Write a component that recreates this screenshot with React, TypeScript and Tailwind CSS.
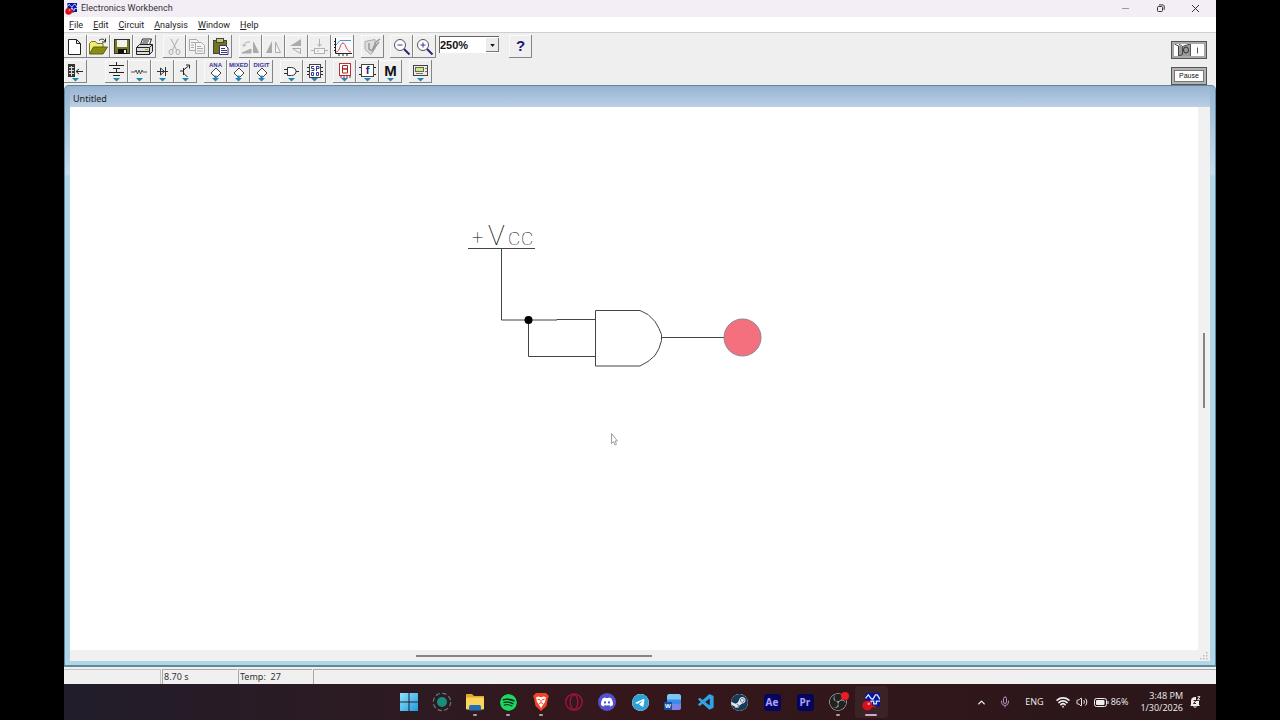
import type { ReactNode } from "react";
import { ChevronUp, Mic, Wifi, Volume2 } from "lucide-react";
import { SiDiscord, SiObsstudio, SiSpotify, SiSteam, SiTelegram } from "react-icons/si";
import { VscVscode } from "react-icons/vsc";

type Tool = { label: string; icon: ReactNode };

const menus = ["File", "Edit", "Circuit", "Analysis", "Window", "Help"];

const Icon = ({ children }: { children: ReactNode }) => (
    <svg viewBox="0 0 23 23" className="h-full w-full" fill="none" stroke="#222" strokeWidth="1" aria-hidden="true">
        {children}
    </svg>
);

// Parts-bin icons carry a small blue arrow under the symbol
const Bin = ({ children }: { children: ReactNode }) => (
    <Icon>
        {children}
        <path d="M8 18h7l-3.500 3.500z" fill="#2383b8" stroke="none" />
    </Icon>
);

const SourceIcon = ({ name }: { name: string }) => (
    <Bin>
        <text x="11.5" y="7" textAnchor="middle" fontSize="6" fontWeight="bold" fill="#38349c" stroke="none" fontFamily="Liberation Sans, sans-serif">{name}</text>
        <path d="M7 13l5-5 5 5-4 4h-2z" fill="#fff" stroke="#444" />
        <path d="M11.500 15.500v4" stroke="#2383b8" strokeWidth="2" />
    </Bin>
);

const AppLogo = ({ className }: { className: string }) => (
    <svg viewBox="0 0 20 20" className={className} aria-hidden="true">
        <rect x="4" y="0" width="16" height="15" fill="#06139a" />
        <path d="M4 6l3-4 3 4 2 1 3-5 2 0 3 5M10 12V9h3v3h3V9h4" fill="none" stroke="#cfe5ff" strokeWidth="1.500" />
        <circle cx="6" cy="14" r="5.500" fill="#d80f1c" />
        <circle cx="7.500" cy="12" r="1.500" fill="#ff9a9a" />
        <path d="M10 15h5" stroke="#d80f1c" strokeWidth="2" />
    </svg>
);

const fileTools: Tool[] = [
    { label: "New", icon: <Icon><path d="M4.500 4.500h8l4 4v11h-12zM12.500 4.500v4h4" fill="#fff" /></Icon> },
    {
        label: "Open",
        icon: (
            <Icon>
                <path d="M2.500 19V8.500l2-2h4l1.500 2h6V12" fill="#f0ee70" stroke="#77752a" />
                <path d="M2.500 19l4-7h14l-4.500 7z" fill="#8a8c16" stroke="#5d6010" />
                <path d="M12 5.500c2-2 5-2 6 1M18.500 3.500v3.500h-3.500" />
            </Icon>
        ),
    },
    {
        label: "Save",
        icon: (
            <Icon>
                <rect x="4.500" y="4.500" width="15" height="14" fill="#777a18" stroke="#333" />
                <rect x="7" y="5" width="10" height="7" fill="#f2f2f2" stroke="none" />
                <rect x="8" y="14" width="9" height="5" fill="#111" stroke="none" />
                <rect x="14" y="15" width="2" height="3" fill="#eee" stroke="none" />
            </Icon>
        ),
    },
    {
        label: "Print",
        icon: (
            <Icon>
                <path d="M7 11l2.500-7h9l-2.500 7" fill="#fff" />
                <path d="M3.500 12.500l3-3h13v7l-3 3h-13z" fill="#ddd" />
                <path d="M3.500 12.500h13v7M16.500 12.500l3-3M4 16.500h12M10 6h6M9 8h6" />
                <path d="M12 14.500h3" stroke="#b0a000" />
            </Icon>
        ),
    },
];

const editTools: Tool[] = [
    { label: "Cut", icon: <Icon><g stroke="#aaa"><path d="M8 4l5.500 11M15 4L9.500 15" /><ellipse cx="8" cy="17" rx="2" ry="2.500" /><ellipse cx="15" cy="17" rx="2" ry="2.500" /></g></Icon> },
    { label: "Copy", icon: <Icon><g stroke="#aaa" fill="#f4f4f4"><path d="M3.500 4.500h7l2 2v9h-9z" /><path d="M9.500 7.500h6l3 3v8h-9z" /><path d="M5 7.500h4M5 10h3M5 12.500h3M11 11.500h4M11 13.500h6M11 16h6" /></g></Icon> },
    {
        label: "Paste",
        icon: (
            <Icon>
                <rect x="4.500" y="5.500" width="13" height="13" fill="#73751c" stroke="#444" />
                <rect x="7.500" y="3.500" width="7" height="4" fill="#c9c56a" stroke="#444" />
                <path d="M10.500 10.500h6l2.500 2.500v6.500h-8.500z" fill="#fff" stroke="#37347e" />
                <path d="M12 13.500h4M12 15.500h6M12 17.500h6" stroke="#37347e" />
            </Icon>
        ),
    },
];

const viewTools: Tool[] = [
    { label: "Rotate", icon: <Icon><path d="M3 18h9v-4zM14.500 17.500v-10l5 10z" fill="#aaa" stroke="#aaa" /><path d="M5 11c0-3 2-4 6-4M3 9.500l2 2 2-2" stroke="#aaa" /></Icon> },
    { label: "Flip horizontal", icon: <Icon><path d="M10 6v12H4z" fill="#aaa" stroke="none" /><path d="M13.500 7v10.500h5z" stroke="#aaa" fill="#f4f4f4" /></Icon> },
    { label: "Flip vertical", icon: <Icon><path d="M16 4v7H5z" fill="#aaa" stroke="none" /><path d="M15.500 13.500v5l-8-5z" stroke="#aaa" fill="#f4f4f4" /></Icon> },
    { label: "Create subcircuit", icon: <Icon><g stroke="#b0b0b0"><path d="M11.500 4v7M9.500 9l2 2.500 2-2.500M3 15.500h3M17 15.500h3" /><rect x="6.500" y="13.500" width="10" height="5" fill="#f4f4f4" /><path d="M9 16h2" /></g></Icon> },
    {
        label: "Display graphs",
        icon: (
            <Icon>
                <rect x="2" y="2" width="20" height="19" fill="#fafafa" stroke="none" />
                <path d="M4.500 3v15.500H21M3 6.500h1M3 9.500h1M3 12.500h1M3 15.500h1M8 19v2M12 19v2M16 19v2" />
                <path d="M5 10l4-4.500h11" stroke="#4898d0" />
                <path d="M5 17c4 0 4-9 7-9s3 9 8 9" stroke="#d84050" />
            </Icon>
        ),
    },
];

const propertyTools: Tool[] = [
    { label: "Component properties", icon: <Icon><path d="M4 6.500l10-2v9l-4 6-6-5z" fill="#ddd" stroke="#aaa" /><path d="M8 8v6l3 2 4-9 4-3M11 16l7-9" stroke="#999" strokeWidth="1.500" /></Icon> },
];

const zoomTools: Tool[] = [
    { label: "Zoom out", icon: <Icon><circle cx="10" cy="10" r="5.500" fill="#fff" stroke="#555" /><path d="M14 14l5.500 5.500" stroke="#29237c" strokeWidth="2" /><path d="M7.500 10h5" stroke="#38349c" /></Icon> },
    { label: "Zoom in", icon: <Icon><circle cx="10" cy="10" r="5.500" fill="#fff" stroke="#555" /><path d="M14 14l5.500 5.500" stroke="#29237c" strokeWidth="2" /><path d="M7.500 10h5M10 7.500v5" stroke="#38349c" /></Icon> },
];

const helpTools: Tool[] = [{ label: "Help topics", icon: <span className="font-['Liberation_Sans',sans-serif] text-[15px] font-bold text-[#1d1778]">?</span> }];

const partBins: Tool[][] = [
    [
        {
            label: "Favorites",
            icon: (
                <Bin>
                    <rect x="4" y="4" width="7" height="13" fill="#333" stroke="none" />
                    <path d="M5 7.500h5M5 10.500h5M5 13.500h5M7.500 6v10" stroke="#ddd" />
                    <path d="M12 11.500h7M15 9l-3 2.500 3 2.500" />
                </Bin>
            ),
        },
    ],
    [
        { label: "Sources", icon: <Bin><path d="M11.500 2v3M4 5.500h15M8 8.500h7M4 12.500h15M8 15.500h7M11.500 8.500v4" /></Bin> },
        { label: "Basic", icon: <Bin><path d="M3 12h4l1-2 1.500 4 1.500-4 1.500 4 1.500-4 1 2h4" stroke="#555" /></Bin> },
        { label: "Diodes", icon: <Bin><path d="M6 11.500h11M9.500 8v7l4-3.500zM14.500 7v9" stroke="#333" /></Bin> },
        { label: "Transistors", icon: <Bin><path d="M6 11h3.500M9.500 8v7M9.500 10l5-4M9.500 13l4 4M12 5h3.500v3.500" stroke="#222" /></Bin> },
    ],
    [
        { label: "Analog ICs", icon: <SourceIcon name="ANA" /> },
        { label: "Mixed ICs", icon: <SourceIcon name="MIXED" /> },
        { label: "Digital ICs", icon: <SourceIcon name="DIGIT" /> },
    ],
    [
        { label: "Logic gates", icon: <Bin><path d="M7.500 7.500h4c6 0 6 8 0 8h-4zM4 9.500h3.500M4 13.500h3.500M16 11.500h3" fill="#fff" stroke="#333" /></Bin> },
        {
            label: "Digital",
            icon: (
                <Bin>
                    <rect x="6.500" y="4.500" width="11" height="13" fill="#fff" stroke="#444" />
                    <path d="M4 7.500h2M4 11.500h2M4 14.500h2M18 7.500h2M18 11.500h2M18 14.500h2" />
                    <path d="M11 6.500H8.500v2H11v2H8.500M13.500 11V6.500H16v2h-2.500M8.500 12.500h2v3h-2zM13.500 12.500h2v3h-2z" stroke="#38349c" />
                </Bin>
            ),
        },
    ],
    [
        {
            label: "Indicators",
            icon: (
                <Bin>
                    <rect x="6.500" y="3.500" width="11" height="12" fill="#fff" stroke="#b33" />
                    <path d="M9.500 5.500h5v3.500h-5zM9.500 9h5v4h-5zM8 15v3M11 15v3M14 15v3M17 15v3" stroke="#a22" />
                </Bin>
            ),
        },
        {
            label: "Controls",
            icon: (
                <Bin>
                    <rect x="5.500" y="4.500" width="12" height="12" fill="#fff" stroke="#444" />
                    <path d="M3 7.500h2M3 14.500h2M18 7.500h2M18 14.500h2" />
                    <text x="11.5" y="14" textAnchor="middle" fontSize="11" fontWeight="bold" fill="#29237c" stroke="none" fontFamily="Liberation Sans, sans-serif">f</text>
                </Bin>
            ),
        },
        { label: "Miscellaneous", icon: <Bin><text x="11.5" y="16" textAnchor="middle" fontSize="15" fontWeight="bold" fill="#111" stroke="none" fontFamily="Liberation Sans, sans-serif">M</text></Bin> },
    ],
    [
        {
            label: "Instruments",
            icon: (
                <Bin>
                    <rect x="4.500" y="5.500" width="14" height="10" fill="#eeeee0" stroke="#444" />
                    <rect x="6.500" y="7.500" width="8" height="4" fill="#d5e87b" stroke="#666" />
                    <path d="M16 8.500h2M16 11.500h2M7 13.500h7" stroke="#777" />
                </Bin>
            ),
        },
    ],
];

const ToolGroup = ({ tools, className }: { tools: Tool[]; className?: string }) => (
    <div className={`flex ${className ?? ""}`}>
        {tools.map((tool) => (
            <button
                key={tool.label}
                aria-label={tool.label}
                className="flex h-[23px] w-[23px] items-center justify-center bg-[#efefef] shadow-[inset_-1px_-1px_0_#858585,inset_1px_1px_0_#fafafa]"
            >
                {tool.icon}
            </button>
        ))}
    </div>
);

const TitleBar = () => (
    <header className="flex h-[17px] shrink-0 items-center bg-[#f3edf6] pr-[3px] pl-px">
        <AppLogo className="h-3 w-3" />
        <h1 className="ml-1 font-['Roboto',sans-serif] text-[9px] text-[#333]">Electronics Workbench</h1>
        <div className="ml-auto flex">
            <button aria-label="Minimize" className="flex h-4 w-[35px] items-center justify-center">
                <svg viewBox="0 0 9 9" className="h-[9px] w-[9px]" stroke="#999"><path d="M1 4.500h7" /></svg>
            </button>
            <button aria-label="Restore" className="flex h-4 w-[35px] items-center justify-center">
                <svg viewBox="0 0 9 9" className="h-[9px] w-[9px]" fill="none" stroke="#333"><rect x="1.500" y="2.500" width="5" height="5" rx="1" /><path d="M3 .9h4.200l1 1v4" /></svg>
            </button>
            <button aria-label="Close" className="flex h-4 w-[35px] items-center justify-center">
                <svg viewBox="0 0 9 9" className="h-[9px] w-[9px]" stroke="#333"><path d="M1 1l7 7M8 1L1 8" /></svg>
            </button>
        </div>
    </header>
);

const MenuBar = () => (
    <nav className="flex h-4 shrink-0 items-center gap-[10px] border-b border-[#cfcfcf] bg-white pl-[5px] font-['Roboto',sans-serif] text-[9px] text-[#222]">
        {menus.map((menu) => (
            <button key={menu} className="leading-[14px]">
                <span className="underline">{menu[0]}</span>{menu.slice(1)}
            </button>
        ))}
    </nav>
);

const Toolbars = () => (
    <div className="flex shrink-0 justify-between bg-[#efefef] pt-0.5 pr-[9px]">
        <div className="flex flex-col gap-0.5 pb-0.5">
            <div className="flex items-start">
                <ToolGroup tools={fileTools} />
                <ToolGroup tools={editTools} className="ml-[7px]" />
                <ToolGroup tools={viewTools} className="ml-[7px]" />
                <ToolGroup tools={propertyTools} className="ml-[7px]" />
                <ToolGroup tools={zoomTools} className="ml-[6px]" />
                <div className="relative mt-px ml-[3px] flex h-[17px] w-[60px]">
                    <select aria-label="Zoom" defaultValue="250%" className="block h-[17px] w-full appearance-none border-t border-l border-[#666] bg-white font-['Liberation_Sans',sans-serif] text-[11px] leading-[14px] font-bold text-[#111]">
                        <option>100%</option>
                        <option>250%</option>
                    </select>
                    <span className="pointer-events-none absolute top-0.5 right-0 flex h-[14px] w-[13px] items-center justify-center bg-[#ececec] shadow-[inset_-1px_-1px_0_#777]">
                        <svg viewBox="0 0 6 4" className="h-[3px] w-[5px]"><path d="M0 0h6L3 4z" fill="#111" /></svg>
                    </span>
                </div>
                <ToolGroup tools={helpTools} className="ml-[10px]" />
            </div>
            <div className="flex gap-[7px]">
                {partBins.map((bin, i) => (
                    <ToolGroup key={i} tools={bin} className={i === 1 ? "ml-[11px]" : ""} />
                ))}
            </div>
        </div>
        <div className="flex flex-col justify-between pt-[6px]">
            <button aria-label="Power switch" className="h-[18px] w-9 border border-[#555] bg-[#a9a9a9] p-0.5">
                <svg viewBox="0 0 30 12" className="h-full w-full" fill="none" stroke="#555">
                    <rect x="0" y="0" width="30" height="12" fill="#fff" stroke="none" />
                    <path d="M4.500 1l4 2 7.500-3v12H5z" fill="#999" stroke="none" />
                    <path d="M.5 0l4 2v10M4.500 12l4-1.500V2.500L5 0M8.500 2.500L16 0" stroke="#444" />
                    <ellipse cx="12" cy="6" rx="2.500" ry="3" stroke="#333" />
                    <path d="M16.500 0v12M23.500 3.500v6" />
                </svg>
            </button>
            <button className="h-[18px] w-9 border border-[#555] bg-[#b4b4b4] p-0.5">
                <span className="flex h-full items-center justify-center border border-[#777] bg-white font-['Liberation_Sans',sans-serif] text-[7px] text-[#111]">Pause</span>
            </button>
        </div>
    </div>
);

const Circuit = () => (
    <svg viewBox="70 107 1128 543" className="h-full min-h-0 w-full min-w-0 flex-1 bg-white" fill="none" stroke="#444" role="img" aria-label="AND gate circuit">
        <g fill="#000" stroke="none" fontFamily="Roboto, sans-serif" fontWeight="100">
            <text x="472" y="244" fontSize="20">+</text>
            <text x="488" y="245" fontSize="28">V</text>
            <text x="508" y="245" fontSize="19">C</text>
            <text x="521" y="245" fontSize="19">C</text>
        </g>
        <path d="M468 248.500h67M501.500 248.500v71.500H557v-.5h38M528.500 320v36.500H595M661 337.500h63" />
        <path d="M595.500 310.500H640l8 4 7 7 4 7 2.500 6v6l-2.500 8-4 7-7 6-8 4.500h-44.500z" />
        <circle cx="528.500" cy="320" r="4" fill="#000" stroke="none" />
        <circle cx="742.500" cy="337.500" r="18.500" fill="#f4707e" stroke="#888" />
        <path d="M611.500 433.500v10l2-2 1.500 3.500 1.500-.8-1.500-3.200h2.500z" fill="#fff" stroke="#888" strokeWidth=".8" />
    </svg>
);

const CircuitWindow = () => (
    <main className="flex min-h-0 flex-1 flex-col rounded-t-[5px] border border-b-2 border-[#5c8a99] bg-[linear-gradient(#98b4d2,#c3dcee_88px,#b0d5e6_90px)] px-[5px] pb-1">
        <h2 className="flex h-[21px] shrink-0 items-end bg-linear-to-b from-[#98b4d2] to-[#b9cfe4] pl-[3px] font-['Noto_Sans',sans-serif] text-[9px] leading-4 text-[#222]">Untitled</h2>
        <div className="flex min-h-0 flex-1">
            <Circuit />
            <div className="flex w-3 shrink-0 flex-col items-center bg-[#f1f1f1]">
                <div className="flex-[226]" />
                <div className="w-0.5 flex-[75] bg-[#858585]" />
                <div className="flex-[242]" />
            </div>
        </div>
        <div className="flex h-[11px] shrink-0 items-center bg-[#f0f0f0]">
            <div className="flex-[347]" />
            <div className="h-0.5 flex-[236] bg-[#858585]" />
            <div className="flex flex-[557] justify-end pr-0.5">
                <svg viewBox="0 0 8 8" className="h-2 w-2" fill="#bbb"><path d="M6 0h1.500v1.500H6zM3 3h1.500v1.500H3zM6 3h1.500v1.500H6zM0 6h1.500v1.500H0zM3 6h1.500v1.500H3zM6 6h1.500v1.500H6z" /></svg>
            </div>
        </div>
    </main>
);

const StatusBar = () => (
    <footer className="flex h-[17px] shrink-0 gap-px bg-[#f0f0f0] pt-0.5 font-['Noto_Sans',sans-serif] text-[9px] leading-[14px] text-[#333]">
        <div className="w-[97px] border-t border-r border-[#c4c4c4]" />
        <div className="w-[75px] border-t border-l border-[#a8a8a8] pl-px">8.70 s</div>
        <div className="w-[74px] border-t border-l border-[#a8a8a8] pl-px whitespace-pre">Temp:  27</div>
        <div className="flex-1 border-t border-l border-[#a8a8a8]" />
    </footer>
);

const AdobeTile = ({ children }: { children: ReactNode }) => (
    <span className="flex h-[17px] w-[17px] items-center justify-center rounded-[3px] bg-[#06055c] text-[10px] font-bold text-[#a9a4ff]">{children}</span>
);

type TaskApp = Tool & { state?: "running" | "active" };

const taskApps: TaskApp[] = [
    {
        label: "Start",
        icon: (
            <svg viewBox="0 0 18 18" className="h-[18px] w-[18px]">
                <defs><linearGradient id="win" x1="0" y1="0" x2="1" y2="1"><stop stopColor="#8be4fc" /><stop offset="1" stopColor="#229ae0" /></linearGradient></defs>
                <path d="M0 0h8.500v8.500H0zM9.500 0H18v8.500H9.500zM0 9.500h8.500V18H0zM9.500 9.500H18V18H9.500z" fill="url(#win)" />
            </svg>
        ),
    },
    {
        label: "Recorder",
        icon: (
            <svg viewBox="0 0 20 20" className="h-5 w-5" fill="none">
                <circle cx="10" cy="10" r="8.700" stroke="#5b7f80" strokeWidth="1.200" strokeDasharray="4.500 2.330" />
                <circle cx="10" cy="10" r="5" fill="#168f7c" />
            </svg>
        ),
    },
    {
        label: "File Explorer",
        state: "running",
        icon: (
            <svg viewBox="0 0 20 18" className="h-[18px] w-5">
                <path d="M1 2c0-1 .5-1 1-1h5l2 2h9c1 0 1 0 1 1v12H1z" fill="#e5a92a" />
                <rect x="1" y="4.500" width="18" height="12" rx="1" fill="#fbd45c" />
                <path d="M4 17.500v-4c0-1 1-1.500 2-1.500h8c1 0 2 .5 2 1.500v4z" fill="#2371b5" />
            </svg>
        ),
    },
    { label: "Spotify", state: "running", icon: <SiSpotify className="h-[17px] w-[17px] rounded-full bg-[#0c2414] text-[#1ed760]" /> },
    {
        label: "Brave",
        state: "running",
        icon: (
            <svg viewBox="0 0 16 18" className="h-[18px] w-4">
                <path d="M3 0h10l3 3-1 2-1.500 8L8 18l-5.500-5L1 5 0 3z" fill="#ef4425" />
                <path d="M3 4.500l2-1 3 .7 3-.7 2 1-1 4.500-1.500 2L8 15l-2.500-4L4 9z" fill="#fff" />
                <path d="M4.500 6l2.500 1M11.500 6L9 7M6 11l2-1.500 2 1.500M8 7v2.500" stroke="#ef4425" fill="none" />
            </svg>
        ),
    },
    {
        label: "Opera GX",
        icon: (
            <svg viewBox="0 0 18 18" className="h-[18px] w-[18px]" fill="none" stroke="#a51345" strokeWidth="1.300">
                <circle cx="9" cy="9" r="8.200" />
                <ellipse cx="9" cy="9" rx="3.800" ry="7.500" />
            </svg>
        ),
    },
    { label: "Discord", icon: <span className="flex h-[18px] w-[18px] items-center justify-center rounded-full bg-[#5350cf]"><SiDiscord className="h-3 w-3 text-white" /></span> },
    { label: "Telegram", icon: <SiTelegram className="h-[17px] w-[17px] rounded-full bg-white text-[#2ba2d3]" /> },
    {
        label: "Word",
        icon: (
            <svg viewBox="0 0 18 18" className="h-[18px] w-[18px]">
                <path d="M5 1h10c1 0 2 1 2 2v4H3V3c0-1 1-2 2-2z" fill="#7cc7f7" />
                <path d="M3 6.500h14v5H3z" fill="#3a8ae8" />
                <path d="M3 11h14v4c0 1-1 2-2 2H5c-1 0-2-1-2-2z" fill="#7b86e8" />
                <rect x="0" y="9" width="8" height="8" rx="1" fill="#174ea6" />
                <text x="4" y="15" textAnchor="middle" fontSize="6" fontWeight="bold" fill="#fff" fontFamily="Open Sans, sans-serif">W</text>
            </svg>
        ),
    },
    { label: "Visual Studio Code", icon: <VscVscode className="h-[19px] w-[19px] text-[#2fa4e4]" /> },
    {
        label: "Steam",
        icon: <SiSteam className="h-[17px] w-[17px] rounded-full bg-[#e4e8ec] text-[#153a5c]" />,
    },
    { label: "After Effects", icon: <AdobeTile>Ae</AdobeTile> },
    { label: "Premiere Pro", icon: <AdobeTile>Pr</AdobeTile> },
    {
        label: "OBS Studio",
        state: "running",
        icon: (
            <span className="relative">
                <SiObsstudio className="h-[18px] w-[18px] rounded-full bg-[#222] text-[#b5b1b1]" />
                <span className="absolute -top-px -right-0.5 h-2 w-2 rounded-full bg-[#ec1c24]" />
            </span>
        ),
    },
    { label: "Electronics Workbench", state: "active", icon: <AppLogo className="h-[18px] w-[18px]" /> },
];

const Taskbar = () => (
    <div className="grid h-9 shrink-0 grid-cols-[1fr_auto_1fr] items-center bg-linear-to-r from-[#211d2a] via-[#35171b] to-[#2a1619] text-[#eee]">
        <div />
        <div className="flex">
            {taskApps.map((app) => (
                <button
                    key={app.label}
                    aria-label={app.label}
                    className={`flex h-8 w-[33px] flex-col items-center rounded pt-1 ${app.state === "active" ? "bg-white/5" : ""}`}
                >
                    <span className="flex h-6 items-center">{app.icon}</span>
                    {app.state === "running" && <span className="h-0.5 w-1 rounded-full bg-[#aaa3a6]" />}
                    {app.state === "active" && <span className="h-0.5 w-3 rounded-full bg-[#d6a3cf]" />}
                </button>
            ))}
        </div>
        <div className="flex items-center justify-end pr-[15px] text-[9px] leading-3">
            <button aria-label="Show hidden icons"><ChevronUp className="h-[11px] w-[11px]" strokeWidth={3} /></button>
            <Mic className="ml-3 h-3 w-3 text-[#b58abf]" />
            <span className="ml-[14px]">ENG</span>
            <Wifi className="ml-3 h-[14px] w-[14px]" strokeWidth={3} />
            <Volume2 className="ml-1.5 h-3 w-3" />
            <svg viewBox="0 0 15 9" className="ml-1.5 h-[9px] w-[15px]" fill="none" stroke="#eee">
                <rect x=".5" y=".5" width="12" height="8" rx="2" />
                <rect x="2" y="2" width="8.500" height="5" rx="1" fill="#eee" stroke="none" />
                <path d="M14 3v3" />
            </svg>
            <span className="ml-0.5">86%</span>
            <div className="ml-3 text-right">
                <div>3:48 PM</div>
                <div>1/30/2026</div>
            </div>
            <svg viewBox="0 0 12 12" className="ml-1.5 h-3 w-3" fill="#eee" role="img" aria-label="Notifications snoozed">
                <path d="M2 9V5c0-3 2-4 4-4h1v4h3v4l1 1H1zM4 10.500h4c-.5 1.500-3.500 1.500-4 0z" />
                <path d="M8.500 .7h2.500l-2.500 3h2.500" fill="none" stroke="#eee" />
                <path d="M4.500 4.500h2.500L4.500 7.500h2.500" fill="none" stroke="#3a2226" />
            </svg>
        </div>
    </div>
);

export default function App() {
    return (
        <div className="h-screen bg-black px-[5%] font-['Open_Sans',sans-serif]">
            <div className="flex h-full flex-col bg-[#efefef]">
                <TitleBar />
                <MenuBar />
                <Toolbars />
                <CircuitWindow />
                <StatusBar />
                <Taskbar />
            </div>
        </div>
    );
}
